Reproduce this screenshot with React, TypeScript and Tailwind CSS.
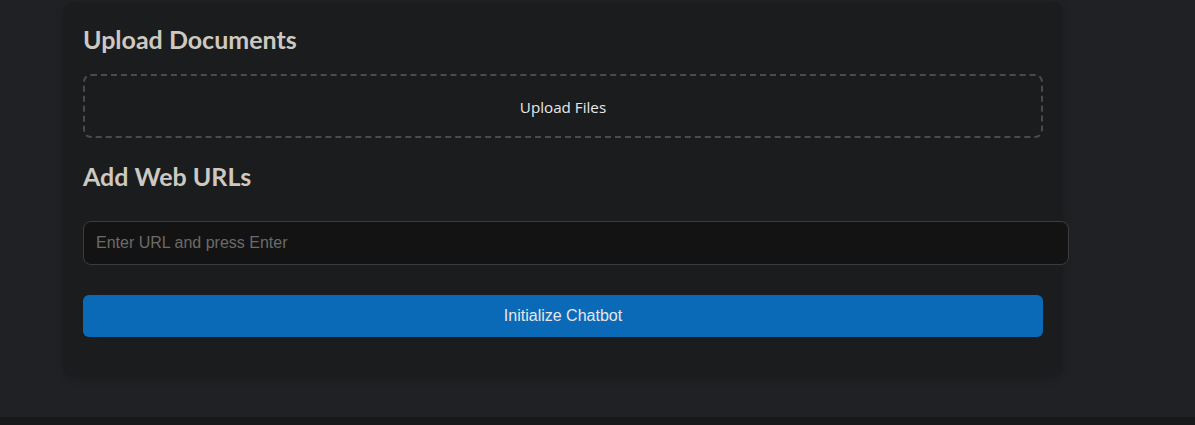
import React from "react";

export default function App() {
  return (
    <div className="h-[425px] w-full bg-[#18191a] overflow-hidden">
      <div className="h-[417px] w-full bg-[#202124] pt-[2px]">
        <div className="ml-[63px] w-[1000px] h-[375px] rounded-[10px] bg-[#1b1c1e] p-5 shadow-[0_2px_8px_rgba(0,0,0,0.15)]">
          <h2 className="mt-[2px] font-['Lato',sans-serif] font-bold text-[25px] leading-[30px] text-[#cdc9c1]">
            Upload Documents
          </h2>
          <div className="mt-[20px] h-[64px] w-[960px] rounded-[8px] border-2 border-dashed border-[#4a4b4d] flex items-center justify-center">
            <span className="font-['Open_Sans',sans-serif] text-[15.2px] text-[#e8e8e8] translate-y-[1px]">Upload Files</span>
          </div>
          <h2 className="mt-[23px] font-['Lato',sans-serif] font-bold text-[25px] leading-[30px] text-[#cdc9c1]">
            Add Web URLs
          </h2>
          <input
            type="text"
            placeholder="Enter URL and press Enter"
            className="mt-[30px] block h-[44px] w-[986px] rounded-[8px] border border-[#3b3c3e] bg-[#131313] px-3 font-['Liberation_Sans',Arial,sans-serif] text-[16px] text-[#ddd] placeholder:text-[#6b6b6b] outline-none"
          />
          <button className="mt-[30px] block h-[42px] w-[960px] rounded-[6px] bg-[#0b6ab8] font-['Liberation_Sans',Arial,sans-serif] text-[16px] text-[#e6e6e6]">
            Initialize Chatbot
          </button>
        </div>
      </div>
    </div>
  );
}
